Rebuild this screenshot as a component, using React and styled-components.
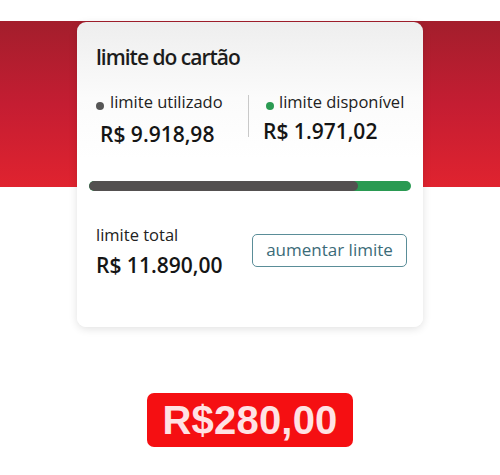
import React from 'react';
import styled, { createGlobalStyle } from 'styled-components';

const Global = createGlobalStyle`
    html, body {
        margin: 0;
        padding: 0;
        background: #ffffff;
    }
    body {
        font-family: "Open Sans", "Noto Sans", sans-serif;
        color: #1c1c1c;
    }
`

const Page = styled.div`
    width: 500px;
    height: 475px;
    padding-top: 21px;
    box-sizing: border-box;
    display: flex;
    flex-direction: column;
    overflow: hidden;
`

const Band = styled.div`
    height: 166px;
    background: linear-gradient(180deg, #a31e2c 0%, #c41d32 50%, #e0232f 100%);
`

const Card = styled.div`
    width: 346px;
    height: 305px;
    margin: -165px auto 0;
    box-sizing: border-box;
    padding: 21px 12px 0 19px;
    border-radius: 9px;
    background: linear-gradient(180deg, #eeeeee 0%, #fbfbfb 25%, #ffffff 45%);
    box-shadow: 0 2px 8px rgba(0, 0, 0, 0.12);
    display: flex;
    flex-direction: column;
`

const Title = styled.h2`
    margin: 0;
    font-size: 21px;
    font-weight: 600;
    letter-spacing: -1px;
    line-height: 28px;
`

const Limits = styled.div`
    display: flex;
    margin-top: 21px;
`

const Column = styled.div`
    flex: ${p => (p.$w ? `0 0 ${p.$w}px` : '1')};
    box-sizing: border-box;
    display: flex;
    flex-direction: column;
    padding-left: ${p => p.$pad}px;
    white-space: nowrap;
`

const Divider = styled.div`
    flex: 0 0 1px;
    height: 42px;
    margin-top: 3px;
    background: #c9c9c9;
`

const Label = styled.div`
    display: flex;
    align-items: center;
    gap: ${p => p.$gap || 6}px;
    font-size: 16.5px;
    line-height: 20px;
    color: #222;
`

const Dot = styled.span`
    width: 8px;
    height: 8px;
    border-radius: 50%;
    margin-top: 8px;
    background: ${p => p.$color};
`

const Amount = styled.div`
    font-size: 21px;
    font-weight: 600;
    line-height: 28px;
    margin-top: ${p => p.$top || 8}px;
    margin-left: ${p => p.$indent || 0}px;
    color: #151515;
`

const Track = styled.div`
    height: 10px;
    margin: 33px 0 0 -7px;
    width: 322px;
    border-radius: 5px;
    background: #2a9a52;
    overflow: hidden;
`

const Fill = styled.div`
    height: 100%;
    background: #535050;
    border-radius: 5px;
`

const Bottom = styled.div`
    display: flex;
    align-items: flex-start;
    justify-content: space-between;
    margin-top: 34px;
    padding-right: 4px;
`

const Total = styled.div`
    display: flex;
    flex-direction: column;
`

const Button = styled.button`
    margin-top: 9px;
    height: 33px;
    width: 155px;
    border: 1.5px solid #5a8d98;
    border-radius: 5px;
    background: #ffffff;
    color: #3b6b78;
    font-family: "Open Sans", "Noto Sans", sans-serif;
    font-size: 17px;
    padding: 0 0 2px;
`

const Badge = styled.div`
    align-self: center;
    margin-top: 66px;
    width: 206px;
    height: 54px;
    border-radius: 7px;
    background: #f50f12;
    color: #ffe2e4;
    font-family: "Liberation Sans", Arial, sans-serif;
    font-weight: 700;
    font-size: 40px;
    letter-spacing: 0.2px;
    display: flex;
    align-items: center;
    justify-content: center;
`

const used = 9918.98;
const total = 11890;

const App = () => {
    return (
        <Page>
            <Global />
            <Band />
            <Card>
                <Title>limite do cartão</Title>
                <Limits>
                    <Column $w={152} $pad={0}>
                        <Label><Dot $color="#565656" />limite utilizado</Label>
                        <Amount $indent={4} $top={8}>R$ 9.918,98</Amount>
                    </Column>
                    <Divider />
                    <Column $pad={17}>
                        <Label $gap={5}><Dot $color="#2a9a52" />limite disponível</Label>
                        <Amount $indent={-3} $top={5}>R$ 1.971,02</Amount>
                    </Column>
                </Limits>
                <Track>
                    <Fill style={{ width: `${(used / total) * 100}%` }} />
                </Track>
                <Bottom>
                    <Total>
                        <Label>limite total</Label>
                        <Amount $top={6}>R$ 11.890,00</Amount>
                    </Total>
                    <Button>aumentar limite</Button>
                </Bottom>
            </Card>
            <Badge>R$280,00</Badge>
        </Page>
    );
};

export default App;
